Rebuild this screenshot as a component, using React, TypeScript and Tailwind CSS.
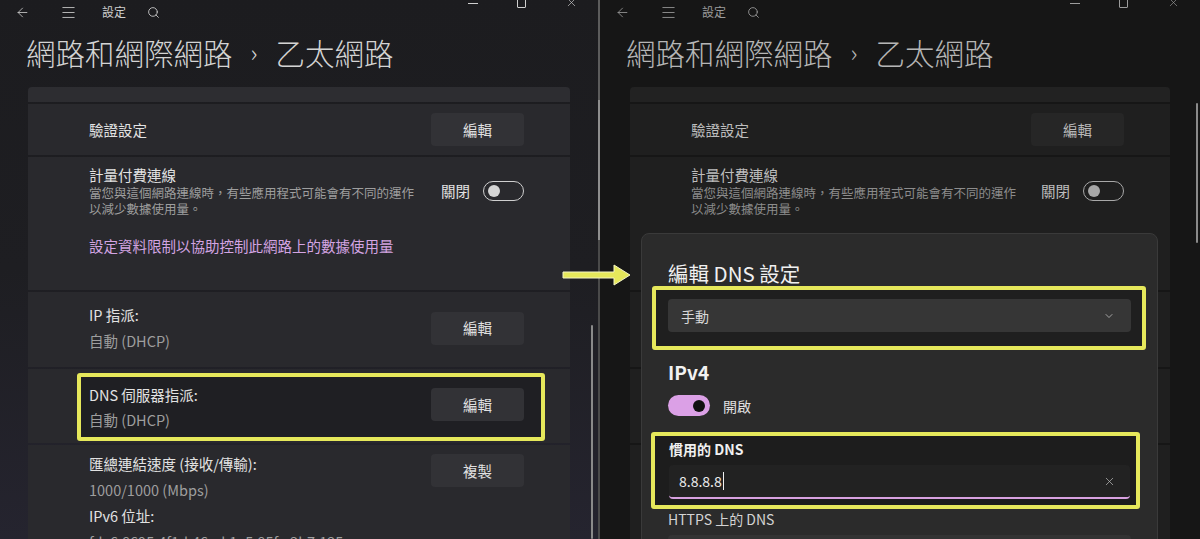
import { ArrowLeft, ChevronDown, Menu, Search, X } from "lucide-react";

type Theme = {
    page: string;
    card: string;
    strip: string;
    title: string;
    text: string;
    sub: string;
    btn: string;
    icon: string;
    link: string;
    toggle: string;
    knob: string;
    hlBox: string;
};

const leftTheme: Theme = {
    page: "bg-linear-to-b from-[#1c1c1f] via-[#1e1e22] to-[#25242f]",
    card: "bg-[#29292d]",
    strip: "bg-[#2d2d31]",
    title: "text-[#d4d4d4]",
    text: "text-[#e2e2e2]",
    sub: "text-[#9e9e9e]",
    btn: "bg-[#323236] text-[#e0e0e0]",
    icon: "text-[#cfcfcf]",
    link: "text-[#d3a4e2]",
    toggle: "border-[#cfcfcf]",
    knob: "bg-[#d4d4d4]",
    hlBox: "border-[4px] border-[#e6e85b] bg-[#1f1f23] rounded-[3px]",
};

const rightTheme: Theme = {
    page: "bg-[#161616]",
    card: "bg-[#1f1f1f]",
    strip: "bg-[#222222]",
    title: "text-[#b6b6b6]",
    text: "text-[#bdbdbd]",
    sub: "text-[#8c8c8c]",
    btn: "bg-[#262626] text-[#b8b8b8]",
    icon: "text-[#9c9c9c]",
    link: "text-[#9a7aa4]",
    toggle: "border-[#a8a8a8]",
    knob: "bg-[#a8a8a8]",
    hlBox: "border-[4px] border-transparent",
};

const EditButton = ({ t, label = "編輯", className = "" }: { t: Theme; label?: string; className?: string }) => (
    <div
        className={`flex h-[33px] w-[93px] shrink-0 items-center justify-center rounded-[4px] text-[14.5px] ${t.btn} ${className}`}
    >
        {label}
    </div>
);

const Pane = ({ t, width, cardMx, scroll }: { t: Theme; width: string; cardMx: string; scroll?: boolean }) => (
    <div className={`relative h-[539px] shrink-0 overflow-hidden ${width} ${t.page}`}>
        {/* title bar */}
        <div className="flex h-[24px] items-center">
            <div className={`flex items-center ${t.icon}`}>
                <ArrowLeft className="ml-[15px] h-[15px] w-[15px]" strokeWidth={1.3} />
                <Menu className="ml-[30px] h-[17px] w-[17px]" strokeWidth={1.2} />
                <span className="ml-[25px] text-[12px] leading-[16px]">設定</span>
                <Search className="ml-[21px] h-[13px] w-[13px]" strokeWidth={1.6} />
            </div>
            <div className={`ml-auto flex gap-[39px] self-start pr-[20px] ${t.icon}`}>
                <div className="mt-[3px] h-[1px] w-[10px] bg-current" />
                <div className="-mt-[3px] h-[11px] w-[9px] rounded-[1px] border border-current" />
                <X className="-mt-[4px] h-[13px] w-[13px]" strokeWidth={1.2} />
            </div>
        </div>

        <div
            className={`mt-[10px] flex h-[36px] items-center whitespace-nowrap pl-[26px] text-[29.5px] font-light leading-[36px] ${t.title}`}
        >
            <span>網路和網際網路</span>
            <span className="mx-[18px] text-[24px] leading-none">›</span>
            <span>乙太網路</span>
        </div>

        <div className={`mt-[17px] flex flex-col gap-[2px] ${cardMx}`}>
            <div className={`h-[15px] rounded-t-[4px] ${t.strip}`} />

            <div className={`flex h-[51px] items-center justify-between pl-[61px] pr-[46px] ${t.card}`}>
                <span className={`text-[14.5px] ${t.text}`}>驗證設定</span>
                <EditButton t={t} />
            </div>

            <div className={`h-[133px] pl-[61px] pr-[46px] pt-[8px] ${t.card}`}>
                <div className="flex items-center">
                    <div className="flex-1">
                        <div className={`text-[14.5px] leading-[20px] ${t.text}`}>計量付費連線</div>
                        <div className={`whitespace-nowrap text-[12.5px] leading-[16px] ${t.sub}`}>
                            當您與這個網路連線時，有些應用程式可能會有不同的運作
                            <br />
                            以減少數據使用量。
                        </div>
                    </div>
                    <span className={`text-[14.5px] leading-[20px] ${t.text}`}>關閉</span>
                    <div className={`ml-[13px] flex h-[20px] w-[41px] items-center rounded-full border ${t.toggle}`}>
                        <div className={`ml-[4px] h-[12px] w-[12px] rounded-full ${t.knob}`} />
                    </div>
                </div>
                <div className={`mt-[19px] text-[14.5px] leading-[20px] ${t.link}`}>
                    設定資料限制以協助控制此網路上的數據使用量
                </div>
            </div>

            <div className={`flex h-[75px] items-center justify-between pb-[3px] pl-[61px] pr-[46px] ${t.card}`}>
                <div className="text-[14.5px] leading-[26px]">
                    <div className={t.text}>IP 指派:</div>
                    <div className={t.sub}>自動 (DHCP)</div>
                </div>
                <EditButton t={t} />
            </div>

            <div className={`h-[74px] pt-[4px] ${t.card}`}>
                <div className={`ml-[49px] mr-[25px] flex h-[68px] items-center justify-between pl-[8px] pr-[17px] ${t.hlBox}`}>
                    <div className="text-[14.5px] leading-[25px]">
                        <div className={t.text}>DNS 伺服器指派:</div>
                        <div className={t.sub}>自動 (DHCP)</div>
                    </div>
                    <EditButton t={t} className="mb-[5px]" />
                </div>
            </div>

            <div className={`flex h-[120px] items-start justify-between pl-[61px] pr-[46px] pt-[6px] ${t.card}`}>
                <div className="text-[14.5px] leading-[26px]">
                    <div className={t.text}>匯總連結速度 (接收/傳輸):</div>
                    <div className={t.sub}>1000/1000 (Mbps)</div>
                    <div className={t.text}>IPv6 位址:</div>
                    <div className={t.sub}>fdc6:8695:4f1d:46ed:1e5:85fe:3b7:125</div>
                </div>
                <EditButton t={t} label="複製" className="mt-[3px]" />
            </div>
        </div>

        {scroll && <div className="absolute bottom-0 right-[5px] top-[325px] w-[2px] rounded-full bg-[#8a8a8a]" />}
    </div>
);

const DnsDialog = () => (
    <div className="absolute left-[41px] top-[233px] h-[330px] w-[517px] rounded-[8px] border border-[#3a3a3a] bg-[#2b2b2b] px-[26px] pt-[26px]">
        <div className="text-[20.5px] leading-[26px] text-[#f0f0f0]">編輯 DNS 設定</div>

        <div className="-ml-[16px] -mr-[15px] rounded-[3px] border-[4px] border-[#e6e85b] bg-[#1f1f1f] pb-[14px] pl-[12px] pr-[11px] pt-[9px]">
            <div className="flex h-[33px] items-center justify-between rounded-[4px] bg-[#363636] pl-[13px] pr-[16px]">
                <span className="text-[14px] leading-[20px] text-[#d8d8d8]">手動</span>
                <ChevronDown className="h-[12px] w-[12px] text-[#c8c8c8]" strokeWidth={1.5} />
            </div>
        </div>

        <div className="mt-[8px] text-[19px] font-semibold leading-[28px] text-[#f2f2f2]">IPv4</div>

        <div className="mt-[9px] flex items-center">
            <div className="flex h-[21px] w-[42px] items-center justify-end rounded-full bg-[#dba0e6] pr-[5px]">
                <div className="h-[12px] w-[12px] rounded-full bg-[#111111]" />
            </div>
            <span className="ml-[13px] text-[14px] leading-[20px] text-[#e0e0e0]">開啟</span>
        </div>

        <div className="-ml-[17px] -mr-[9px] mt-[16px] rounded-[3px] border-[4px] border-[#e6e85b] bg-[#1d1d1d] pb-[6px] pl-[14px] pr-[6px] pt-[3px]">
            <div className="text-[14px] font-semibold leading-[20px] text-[#f0f0f0]">慣用的 DNS</div>
            <div className="mt-[6px] flex h-[34px] items-center justify-between rounded-[4px] border-b-2 border-[#d7a1e0] bg-[#222222] pl-[10px] pr-[14px]">
                <span className="flex items-center text-[14px] leading-[20px] text-[#ececec]">
                    8.8.8.8
                    <span className="ml-[1px] inline-block h-[18px] w-[1px] bg-[#f0f0f0]" />
                </span>
                <X className="h-[13px] w-[13px] text-[#bdbdbd]" strokeWidth={1.3} />
            </div>
        </div>

        <div className="text-[14px] leading-[20px] text-[#d4d4d4]">HTTPS 上的 DNS</div>
        <div className="mt-[6px] h-[34px] rounded-[4px] bg-[#333333]" />
    </div>
);

export default function App() {
    return (
        <div className="relative flex h-[539px] w-[1200px] overflow-hidden bg-[#161616] font-['Noto_Sans_CJK_TC','Noto_Sans',sans-serif]">
            <Pane t={leftTheme} width="w-[598px]" cardMx="ml-[28px] mr-[28px]" scroll />

            <div className="flex w-[2px] shrink-0 flex-col">
                <div className="h-[100px] bg-[#5c5c5c]" />
                <div className="h-[140px] bg-[#8e8e8e]" />
                <div className="flex-1 bg-[#4a4a4a]" />
            </div>

            <div className="relative">
                <Pane t={rightTheme} width="w-[600px]" cardMx="ml-[30px] mr-[30px]" />
                <DnsDialog />
                <div className="absolute right-[2px] top-[103px] h-[140px] w-[2px] rounded-full bg-[#8a8a8a]" />
            </div>

            {/* annotation arrow */}
            <svg className="absolute left-[561px] top-[263px]" width="72" height="24" viewBox="0 0 72 24">
                <path
                    d="M2 9 H53 V2 L69 12 L53 22 V15 H2 Z"
                    fill="#e6e85b"
                    stroke="#f4f4c4"
                    strokeWidth="1"
                    strokeLinejoin="round"
                />
            </svg>
        </div>
    );
}
